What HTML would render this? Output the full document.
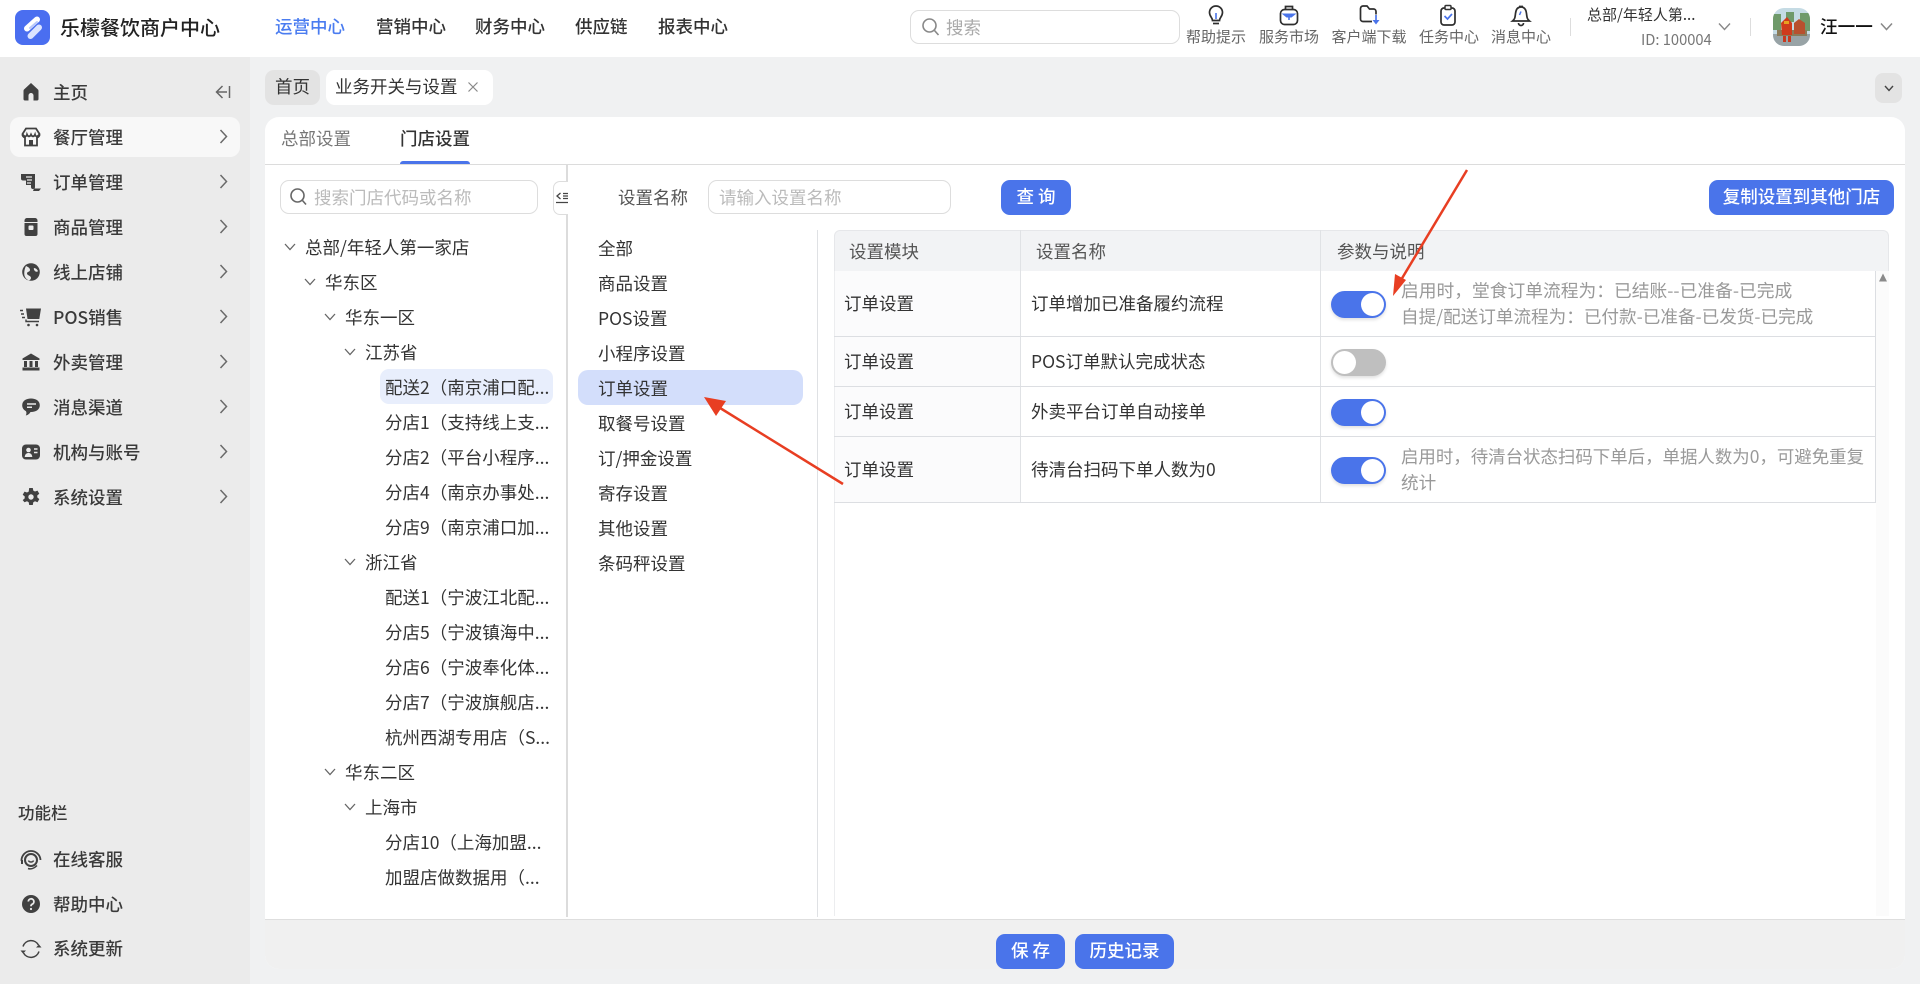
<!DOCTYPE html>
<html lang="zh"><head><meta charset="utf-8"><title>乐檬餐饮商户中心</title>
<style>
*{box-sizing:border-box}
html,body{margin:0;padding:0}
body{width:1920px;height:984px;position:relative;overflow:hidden;background:#f1f2f4;font-family:"Noto Sans CJK SC","Liberation Sans",sans-serif;font-size:17.5px;color:#333}
.a{position:absolute}
.t{position:absolute;white-space:nowrap;line-height:24px;height:24px}
svg{position:absolute;overflow:visible}
.nav{color:#333;font-size:17.5px;font-weight:500}
.side{color:#3a3a3a;left:53px;font-weight:500;font-size:17.5px;margin-top:1px}
.lbl{font-size:15px;color:#666;transform:translateX(-50%)}
.hi{fill:none;stroke:#2e2e2e;stroke-width:1.7}
.row{position:absolute;height:1px;background:#dcdee2;left:834px;width:1042px}
.tog{position:absolute;left:1331px;width:55px;height:27px;border-radius:14px;background:#4a74ea;box-shadow:0 2px 3px rgba(0,0,0,.12)}
.tog i{position:absolute;right:2px;top:2px;width:23px;height:23px;border-radius:50%;background:#fff}
.tog.off{background:#bfbfbf}.tog.off i{left:2px;right:auto}
.btn{position:absolute;background:#4a74ea;color:#fff;border-radius:9px;text-align:center;font-size:17.5px;height:35px;line-height:34px;font-weight:500}
.leaf{color:#333;margin-top:1px}
.gray{color:#999}
.desc{color:#999;font-size:17.6px}
.cat{left:598px;color:#333;margin-top:1px}
.cell{color:#333}
</style></head><body>

<!-- header -->
<div class="a" style="left:0;top:0;width:1920px;height:57px;background:#fff"></div>
<svg style="left:15px;top:10px" width="35" height="35" viewBox="0 0 35 35"><rect width="35" height="35" rx="8" fill="#4a6ef0"/><path d="M12 18.500L22 9.500" stroke="#fff" stroke-width="6" stroke-linecap="round"/><path d="M15.500 26L24 17.500" stroke="#dbe4ff" stroke-width="6" stroke-linecap="round"/><path d="M15 18L22 12" stroke="#b9c9fb" stroke-width="2" stroke-linecap="round"/></svg>
<div class="t" style="left:60px;top:15px;font-size:20px;font-weight:500;color:#222">乐檬餐饮商户中心</div>
<div class="t nav" style="left:275px;top:15px;color:#4a7cf0">运营中心</div>
<div class="t nav" style="left:376px;top:15px">营销中心</div>
<div class="t nav" style="left:475px;top:15px">财务中心</div>
<div class="t nav" style="left:575px;top:15px">供应链</div>
<div class="t nav" style="left:658px;top:15px">报表中心</div>

<div class="a" style="left:910px;top:10px;width:270px;height:34px;border:1px solid #ddd;border-radius:9px;background:#fff"></div>
<svg style="left:921px;top:17px" width="20" height="20" viewBox="0 0 20 20"><circle cx="8.500" cy="8.500" r="6.500" fill="none" stroke="#888" stroke-width="1.600"/><path d="M13.500 13.500L17.500 18" stroke="#888" stroke-width="1.600"/></svg>
<div class="t gray" style="left:946px;top:16px;color:#aaa">搜索</div>

<svg style="left:1205px;top:4px" width="22" height="22" viewBox="0 0 22 22"><path class="hi" d="M7.500 16.500C7.500 13.500 4.500 12.500 4.500 8.500a6.500 6.500 0 0 1 13 0c0 4-3 5-3 8z"/><path class="hi" d="M8 19.500h6"/><path d="M11 9v6" stroke="#4a74ea" stroke-width="1.600"/></svg>
<svg style="left:1278px;top:4px" width="22" height="22" viewBox="0 0 22 22"><rect class="hi" x="2.500" y="5.500" width="17" height="15" rx="4"/><path class="hi" d="M7.500 5.500V2.500h7v3"/><path d="M3.500 9.500h15l-5 4h-5z" fill="#4a74ea"/><path d="M11 13v3" stroke="#4a74ea" stroke-width="1.600"/></svg>
<svg style="left:1358px;top:4px" width="24" height="22" viewBox="0 0 24 22"><path class="hi" d="M14 17.500H5a2.500 2.500 0 0 1-2.500-2.500V4.500A2.500 2.500 0 0 1 5 2h4l2.500 3H15.500a2.500 2.500 0 0 1 2.500 2.500v3"/><path d="M18 11v7" stroke="#4a74ea" stroke-width="1.700"/><path d="M14.500 16h7L18 20.500z" fill="#4a74ea"/></svg>
<svg style="left:1437px;top:4px" width="22" height="22" viewBox="0 0 22 22"><rect class="hi" x="4" y="4" width="14" height="17" rx="3"/><rect x="8" y="1.500" width="6" height="4" rx="1" fill="#fff" stroke="#333" stroke-width="1.500"/><path d="M7.500 12l3 3 4.500-5" fill="none" stroke="#4a74ea" stroke-width="1.700"/></svg>
<svg style="left:1510px;top:4px" width="22" height="22" viewBox="0 0 22 22"><path class="hi" d="M2.500 17c2.500-2 2.500-3.500 3-7.500C6 5 8 3 11 3s5 2 5.500 6.500c.5 4 .5 5.500 3 7.500z"/><path class="hi" d="M9 2.500h4M8.500 19a2.500 2.500 0 0 0 5 0"/><path d="M11 7.500L9.500 11" stroke="#4a74ea" stroke-width="1.500"/></svg>
<div class="t lbl" style="left:1216px;top:25px">帮助提示</div>
<div class="t lbl" style="left:1289px;top:25px">服务市场</div>
<div class="t lbl" style="left:1369px;top:25px">客户端下载</div>
<div class="t lbl" style="left:1449px;top:25px">任务中心</div>
<div class="t lbl" style="left:1521px;top:25px">消息中心</div>

<div class="a" style="left:1570px;top:18px;width:1px;height:18px;background:#ddd"></div>
<div class="t" style="left:1587px;top:3px;font-size:15px;color:#333">总部/年轻人第...</div>
<div class="t" style="left:1641px;top:28px;font-size:14.7px;color:#777">ID: 100004</div>
<svg style="left:1718px;top:22px" width="13" height="9" viewBox="0 0 13 9"><path d="M1 1.500l5.500 6 5.500-6" fill="none" stroke="#888" stroke-width="1.400"/></svg>
<div class="a" style="left:1750px;top:18px;width:1px;height:18px;background:#ddd"></div>
<svg style="left:1773px;top:8px" width="37" height="38" viewBox="0 0 37 38"><clipPath id="av"><rect width="37" height="38" rx="11"/></clipPath><g clip-path="url(#av)"><rect width="37" height="38" fill="#c5dbe4"/><path d="M0 6h8v16H0zM27 5h10v18H27zM13 4h8v10h-8z" fill="#6f9a6a"/><rect y="26" width="37" height="12" fill="#98a3a6"/><rect x="4" y="22" width="30" height="6" fill="#8a7a58"/><path d="M8 15l6-6 5 6v12H9z" fill="#cf3a1c"/><path d="M21 15l5-4 6 4v11H21z" fill="#b8502e"/><path d="M11 13h5v3h-5z" fill="#e8a020"/><rect x="10" y="28" width="3" height="6" fill="#c9381e"/><rect x="15" y="28" width="3" height="6" fill="#c9381e"/></g></svg>
<div class="t" style="left:1820px;top:15px;font-size:17.6px;font-weight:500;color:#111">汪一一</div>
<svg style="left:1880px;top:22px" width="13" height="9" viewBox="0 0 13 9"><path d="M1 1.500l5.500 6 5.500-6" fill="none" stroke="#888" stroke-width="1.500"/></svg>

<!-- sidebar -->
<div class="a" style="left:0;top:57px;width:250px;height:927px;background:#ebebeb"></div>
<div class="a" style="left:10px;top:117px;width:230px;height:40px;background:#f8f8f8;border-radius:10px"></div>

<svg style="left:21px;top:82px" width="20" height="20" viewBox="0 0 20 20"><path d="M10 1L3 7.500Q2.500 8 2.500 9V17Q2.500 18.500 4 18.500H7.500v-5a2.500 2.500 0 0 1 5 0v5H16Q17.500 18.500 17.500 17V9Q17.500 8 17 7.500z" fill="#414141"/></svg>
<svg style="left:21px;top:127px" width="20" height="20" viewBox="0 0 20 20"><path d="M5 1.500h10l3.500 5.500a3 3 0 0 1-2.500 3.500v8H4v-8A3 3 0 0 1 1.500 7z" fill="none" stroke="#414141" stroke-width="1.800"/><path d="M2 7.500c1 2.500 3.500 2.500 4 0 1 2.500 3 2.500 4 0 1 2.500 3 2.500 4 0 .5 2.500 3 2.500 4 0" fill="none" stroke="#414141" stroke-width="1.700"/><rect x="8" y="13" width="4" height="5.500" fill="#414141"/></svg>
<svg style="left:20px;top:172px" width="22" height="20" viewBox="0 0 22 20"><path d="M1 2h14v13a2 2 0 0 1-2 2 2 2 0 0 1-2-2V13H6V8.500H3A2 2 0 0 1 1 6.500z" fill="#414141"/><path d="M6 5h6M7 8h5M7 11h4" stroke="#ebebeb" stroke-width="1.300"/><path d="M13 19h6l2-2.500h-7z" fill="#414141"/></svg>
<svg style="left:21px;top:217px" width="20" height="20" viewBox="0 0 20 20"><path d="M6 1h8a2.500 2.500 0 0 1 2.500 2.500V17a2 2 0 0 1-2 2H5.500a2 2 0 0 1-2-2V3.500A2.500 2.500 0 0 1 6 1z" fill="#414141"/><path d="M3.500 5.500h13" stroke="#ebebeb" stroke-width="1"/><rect x="7.500" y="8.500" width="5" height="4.500" rx="1" fill="#ebebeb"/></svg>
<svg style="left:21px;top:262px" width="20" height="20" viewBox="0 0 20 20"><circle cx="10" cy="10" r="8.800" fill="#414141"/><path d="M5 4c2 1 4 2 4 4s-3 1.500-3 3.500 4 2 4 4.500c0 1-1 2-2 2.500-1-.3-3-1.500-4-3.500-1.500-3-.5-8.500 1-11zM13 6c1.500 0 3 1 4 3-1 1.500-3 .5-3.500-.5S12.500 7 13 6z" fill="#ebebeb"/></svg>
<svg style="left:20px;top:307px" width="22" height="20" viewBox="0 0 22 20"><path d="M6 1.500h15l-1.700 10.500H7.500z" fill="#414141"/><path d="M6 12.500v2h13" fill="none" stroke="#414141" stroke-width="1.400"/><circle cx="8.500" cy="18" r="1.300" fill="#414141"/><circle cx="17" cy="18" r="1.300" fill="#414141"/><path d="M0 3.500h3M1 7h3M2 10.500h3" stroke="#414141" stroke-width="1.500"/></svg>
<svg style="left:21px;top:352px" width="20" height="20" viewBox="0 0 20 20"><path d="M10 1.500L1.500 6.500V8h17V6.500z" fill="#414141"/><rect x="3" y="9" width="3" height="6" fill="#414141"/><rect x="8.500" y="9" width="3" height="6" fill="#414141"/><rect x="14" y="9" width="3" height="6" fill="#414141"/><rect x="1.500" y="15.500" width="17" height="3" fill="#414141"/></svg>
<svg style="left:21px;top:397px" width="20" height="20" viewBox="0 0 20 20"><path d="M10 1.500c5 0 8.800 2.500 8.800 6.800S15 15 10 15l-.5 0C8.800 16.500 7 18 4.800 18.500 5.500 17 5.700 15.500 5 14.200 2.700 13 1.200 11 1.200 8.300 1.200 4 5 1.500 10 1.500z" fill="#414141"/><path d="M6 7h9M6 10.300h5" stroke="#ebebeb" stroke-width="1.500"/></svg>
<svg style="left:21px;top:442px" width="20" height="20" viewBox="0 0 20 20"><rect x="1" y="2.500" width="18" height="15" rx="4" fill="#414141"/><circle cx="7.500" cy="8" r="2.300" fill="#ebebeb"/><path d="M3.700 15c.3-3 2-4 3.800-4s3.500 1 3.800 4z" fill="#ebebeb"/><path d="M13 7h3.500M13 10.500h3.500" stroke="#ebebeb" stroke-width="1.500"/></svg>
<svg style="left:21px;top:487px" width="20" height="20" viewBox="0 0 20 20"><path d="M8.200 1h3.600l.5 2.600 1.700.9 2.500-.9 1.800 3.100-2 1.700v2l2 1.700-1.800 3.100-2.500-.9-1.700.9-.5 2.800H8.200l-.5-2.800-1.700-.9-2.500.9L1.700 13.100l2-1.700v-2l-2-1.700L3.500 4.600l2.500.9 1.700-.9z" fill="#414141"/><circle cx="10" cy="10" r="2.700" fill="#ebebeb"/></svg>

<div class="t side" style="top:80px">主页</div>
<div class="t side" style="top:125px">餐厅管理</div>
<div class="t side" style="top:170px">订单管理</div>
<div class="t side" style="top:215px">商品管理</div>
<div class="t side" style="top:260px">线上店铺</div>
<div class="t side" style="top:305px">POS销售</div>
<div class="t side" style="top:350px">外卖管理</div>
<div class="t side" style="top:395px">消息渠道</div>
<div class="t side" style="top:440px">机构与账号</div>
<div class="t side" style="top:485px">系统设置</div>

<svg style="left:215px;top:85px" width="16" height="14" viewBox="0 0 16 14"><path d="M7.500 1L1.500 7l6 6M1.500 7H12M14.500 1v12" fill="none" stroke="#666" stroke-width="1.500"/></svg>
<svg style="left:219px;top:129px" width="9" height="15" viewBox="0 0 9 15"><path d="M1.500 1l6 6.500-6 6.500" fill="none" stroke="#6a6a6a" stroke-width="1.500"/></svg>
<svg style="left:219px;top:174px" width="9" height="15" viewBox="0 0 9 15"><path d="M1.500 1l6 6.500-6 6.500" fill="none" stroke="#6a6a6a" stroke-width="1.500"/></svg>
<svg style="left:219px;top:219px" width="9" height="15" viewBox="0 0 9 15"><path d="M1.500 1l6 6.500-6 6.500" fill="none" stroke="#6a6a6a" stroke-width="1.500"/></svg>
<svg style="left:219px;top:264px" width="9" height="15" viewBox="0 0 9 15"><path d="M1.500 1l6 6.500-6 6.500" fill="none" stroke="#6a6a6a" stroke-width="1.500"/></svg>
<svg style="left:219px;top:309px" width="9" height="15" viewBox="0 0 9 15"><path d="M1.500 1l6 6.500-6 6.500" fill="none" stroke="#6a6a6a" stroke-width="1.500"/></svg>
<svg style="left:219px;top:354px" width="9" height="15" viewBox="0 0 9 15"><path d="M1.500 1l6 6.500-6 6.500" fill="none" stroke="#6a6a6a" stroke-width="1.500"/></svg>
<svg style="left:219px;top:399px" width="9" height="15" viewBox="0 0 9 15"><path d="M1.500 1l6 6.500-6 6.500" fill="none" stroke="#6a6a6a" stroke-width="1.500"/></svg>
<svg style="left:219px;top:444px" width="9" height="15" viewBox="0 0 9 15"><path d="M1.500 1l6 6.500-6 6.500" fill="none" stroke="#6a6a6a" stroke-width="1.500"/></svg>
<svg style="left:219px;top:489px" width="9" height="15" viewBox="0 0 9 15"><path d="M1.500 1l6 6.500-6 6.500" fill="none" stroke="#6a6a6a" stroke-width="1.500"/></svg>

<div class="t" style="left:18px;top:800px;font-size:16.5px;font-weight:500;color:#3a3a3a">功能栏</div>
<svg style="left:20px;top:849px" width="22" height="22" viewBox="0 0 22 22"><path d="M1.500 12a9 9 0 0 1 19-1" fill="none" stroke="#414141" stroke-width="1.800"/><circle cx="11" cy="11" r="6" fill="none" stroke="#414141" stroke-width="2"/><path d="M8.500 11.500c.5 2 4.500 2 5 0" fill="none" stroke="#414141" stroke-width="1.500"/><path d="M1 11v4l2 0v-4z" fill="#414141"/><path d="M8 19.500c3 1 6 0 9-3" fill="none" stroke="#414141" stroke-width="1.500"/></svg>
<svg style="left:21px;top:894px" width="20" height="20" viewBox="0 0 20 20"><circle cx="10" cy="10" r="9" fill="#414141"/><path d="M7.300 7.500a2.800 2.800 0 1 1 3.900 2.700c-.9.400-1.200 1-1.200 2" fill="none" stroke="#ebebeb" stroke-width="1.800"/><circle cx="10" cy="15" r="1.100" fill="#ebebeb"/></svg>
<svg style="left:20px;top:938px" width="22" height="22" viewBox="0 0 22 22"><path d="M3 8.500a8.500 8.500 0 0 1 15.500-1.500M19 13.500A8.500 8.500 0 0 1 3.500 15" fill="none" stroke="#414141" stroke-width="1.500"/><path d="M16 9.500h5.500L19 6.500z M.5 12.500h5.500L3 15.500z" fill="#414141"/></svg>
<div class="t side" style="top:847px">在线客服</div>
<div class="t side" style="top:892px">帮助中心</div>
<div class="t side" style="top:936px">系统更新</div>

<!-- tabs -->
<div class="a" style="left:250px;top:57px;width:1670px;height:927px;background:#f0f1f2"></div>
<div class="a" style="left:265px;top:70px;width:55px;height:35px;background:#e3e3e3;border-radius:9px"></div>
<div class="t" style="left:275px;top:75px">首页</div>
<div class="a" style="left:326px;top:70px;width:167px;height:35px;background:#fff;border-radius:9px"></div>
<div class="t" style="left:335px;top:75px">业务开关与设置</div>
<svg style="left:467px;top:81px" width="12" height="12" viewBox="0 0 12 12"><path d="M1.500 1.500l9 9M10.500 1.500l-9 9" stroke="#888" stroke-width="1.200"/></svg>
<div class="a" style="left:1875px;top:73px;width:27px;height:30px;background:#e3e3e3;border-radius:8px"></div>
<svg style="left:1884px;top:85px" width="10" height="7" viewBox="0 0 10 7"><path d="M1 1l4 4.500L9 1" fill="none" stroke="#444" stroke-width="1.400"/></svg>

<!-- card -->
<div class="a" style="left:265px;top:117px;width:1640px;height:852px;background:#fff;border-radius:14px;overflow:hidden">
  <div class="a" style="left:0;top:802px;width:1640px;height:50px;background:#f0f0f0;border-top:1px solid #dedede"></div>
</div>
<div class="t" style="left:281px;top:127px;color:#777">总部设置</div>
<div class="t" style="left:400px;top:127px;color:#333;font-weight:500">门店设置</div>
<div class="a" style="left:400px;top:161px;width:70px;height:4px;background:#4a74ea;border-radius:3px 3px 0 0"></div>
<div class="a" style="left:265px;top:164px;width:1640px;height:1px;background:#dcdcdc"></div>
<div class="a" style="left:566px;top:165px;width:2px;height:752px;background:#dcdcdc"></div>

<!-- tree -->
<div class="a" style="left:280px;top:180px;width:258px;height:34px;border:1px solid #ddd;border-radius:9px"></div>
<svg style="left:289px;top:187px" width="20" height="20" viewBox="0 0 20 20"><circle cx="8.500" cy="8.500" r="6.500" fill="none" stroke="#666" stroke-width="1.600"/><path d="M13.500 13.500L17 17.500" stroke="#666" stroke-width="1.600"/></svg>
<div class="t" style="left:314px;top:186px;color:#bbb">搜索门店代码或名称</div>
<div class="a" style="left:553px;top:181px;width:15px;height:34px;background:#fff;border:1px solid #ddd;border-right:0;border-radius:7px 0 0 7px"></div>
<svg style="left:556px;top:192px" width="12" height="14" viewBox="0 0 12 14"><path d="M4.500 1L1 4l3.500 3M7 1.500h5M7 4h5M7 6.500h5M0 10.500h12" fill="none" stroke="#444" stroke-width="1.300"/></svg>

<div class="a" style="left:380px;top:369px;width:173px;height:35px;background:#e8eefc;border-radius:9px"></div>

<svg style="left:284px;top:243px" width="12" height="8" viewBox="0 0 12 8"><path d="M1 1l5 5.500L11 1" fill="none" stroke="#666" stroke-width="1.300"/></svg>
<svg style="left:304px;top:278px" width="12" height="8" viewBox="0 0 12 8"><path d="M1 1l5 5.500L11 1" fill="none" stroke="#666" stroke-width="1.300"/></svg>
<svg style="left:324px;top:313px" width="12" height="8" viewBox="0 0 12 8"><path d="M1 1l5 5.500L11 1" fill="none" stroke="#666" stroke-width="1.300"/></svg>
<svg style="left:344px;top:348px" width="12" height="8" viewBox="0 0 12 8"><path d="M1 1l5 5.500L11 1" fill="none" stroke="#666" stroke-width="1.300"/></svg>
<svg style="left:344px;top:558px" width="12" height="8" viewBox="0 0 12 8"><path d="M1 1l5 5.500L11 1" fill="none" stroke="#666" stroke-width="1.300"/></svg>
<svg style="left:324px;top:768px" width="12" height="8" viewBox="0 0 12 8"><path d="M1 1l5 5.500L11 1" fill="none" stroke="#666" stroke-width="1.300"/></svg>
<svg style="left:344px;top:803px" width="12" height="8" viewBox="0 0 12 8"><path d="M1 1l5 5.500L11 1" fill="none" stroke="#666" stroke-width="1.300"/></svg>

<div class="t leaf" style="left:305px;top:235px">总部/年轻人第一家店</div>
<div class="t leaf" style="left:325px;top:270px">华东区</div>
<div class="t leaf" style="left:345px;top:305px">华东一区</div>
<div class="t leaf" style="left:365px;top:340px">江苏省</div>
<div class="t leaf" style="left:385px;top:375px">配送2（南京浦口配...</div>
<div class="t leaf" style="left:385px;top:410px">分店1（支持线上支...</div>
<div class="t leaf" style="left:385px;top:445px">分店2（平台小程序...</div>
<div class="t leaf" style="left:385px;top:480px">分店4（南京办事处...</div>
<div class="t leaf" style="left:385px;top:515px">分店9（南京浦口加...</div>
<div class="t leaf" style="left:365px;top:550px">浙江省</div>
<div class="t leaf" style="left:385px;top:585px">配送1（宁波江北配...</div>
<div class="t leaf" style="left:385px;top:620px">分店5（宁波镇海中...</div>
<div class="t leaf" style="left:385px;top:655px">分店6（宁波奉化体...</div>
<div class="t leaf" style="left:385px;top:690px">分店7（宁波旗舰店...</div>
<div class="t leaf" style="left:385px;top:725px">杭州西湖专用店（S...</div>
<div class="t leaf" style="left:345px;top:760px">华东二区</div>
<div class="t leaf" style="left:365px;top:795px">上海市</div>
<div class="t leaf" style="left:385px;top:830px">分店10（上海加盟...</div>
<div class="t leaf" style="left:385px;top:865px">加盟店做数据用（...</div>

<!-- query bar -->
<div class="t" style="left:618px;top:186px;color:#555">设置名称</div>
<div class="a" style="left:708px;top:180px;width:243px;height:34px;border:1px solid #ddd;border-radius:9px"></div>
<div class="t" style="left:719px;top:186px;color:#bbb">请输入设置名称</div>
<div class="btn" style="left:1001px;top:180px;width:70px">查 询</div>
<div class="btn" style="left:1709px;top:180px;width:185px">复制设置到其他门店</div>

<!-- categories -->
<div class="a" style="left:578px;top:370px;width:225px;height:35px;background:#d3defb;border-radius:10px"></div>
<div class="a" style="left:817px;top:230px;width:1px;height:687px;background:#dfe1e4"></div>
<div class="t cat" style="top:236px">全部</div>
<div class="t cat" style="top:271px">商品设置</div>
<div class="t cat" style="top:306px">POS设置</div>
<div class="t cat" style="top:341px">小程序设置</div>
<div class="t cat" style="top:376px">订单设置</div>
<div class="t cat" style="top:411px">取餐号设置</div>
<div class="t cat" style="top:446px">订/押金设置</div>
<div class="t cat" style="top:481px">寄存设置</div>
<div class="t cat" style="top:516px">其他设置</div>
<div class="t cat" style="top:551px">条码秤设置</div>

<!-- table -->
<div class="a" style="left:834px;top:230px;width:1055px;height:41px;background:#f2f3f5;border:1px solid #e6e7ea;border-bottom:0;border-radius:6px 6px 0 0"></div>
<div class="a" style="left:835px;top:271px;width:186px;height:231px;background:#fbfbfc"></div>
<div class="a" style="left:1876px;top:271px;width:13px;height:645px;background:#fbfbfb"></div>
<div class="a" style="left:834px;top:271px;width:1px;height:645px;background:#ecedef"></div>
<div class="a" style="left:1020px;top:230px;width:1px;height:272px;background:#e0e2e5"></div>
<div class="a" style="left:1320px;top:230px;width:1px;height:272px;background:#e0e2e5"></div>
<div class="a" style="left:1875px;top:271px;width:1px;height:231px;background:#dcdee2"></div>
<div class="row" style="top:336px"></div>
<div class="row" style="top:386px"></div>
<div class="row" style="top:436px"></div>
<div class="row" style="top:502px"></div>
<svg style="left:1878px;top:273px" width="10" height="9" viewBox="0 0 10 9"><path d="M5 0.500L9 8.500H1z" fill="#8a8a8a"/></svg>

<div class="t" style="left:849px;top:240px;color:#555">设置模块</div>
<div class="t" style="left:1036px;top:240px;color:#555">设置名称</div>
<div class="t" style="left:1337px;top:240px;color:#555">参数与说明</div>

<div class="t cell" style="left:844px;top:292px">订单设置</div>
<div class="t cell" style="left:1031px;top:292px">订单增加已准备履约流程</div>
<div class="tog" style="top:291px"><i></i></div>
<div class="t desc" style="left:1401px;top:278px;font-size:17.75px">启用时，堂食订单流程为：已结账--已准备-已完成</div>
<div class="t desc" style="left:1401px;top:305px;font-size:17.6px">自提/配送订单流程为：已付款-已准备-已发货-已完成</div>

<div class="t cell" style="left:844px;top:350px">订单设置</div>
<div class="t cell" style="left:1031px;top:350px">POS订单默认完成状态</div>
<div class="tog off" style="top:349px"><i></i></div>

<div class="t cell" style="left:844px;top:400px">订单设置</div>
<div class="t cell" style="left:1031px;top:400px">外卖平台订单自动接单</div>
<div class="tog" style="top:399px"><i></i></div>

<div class="t cell" style="left:844px;top:458px">订单设置</div>
<div class="t cell" style="left:1031px;top:458px">待清台扫码下单人数为0</div>
<div class="tog" style="top:457px"><i></i></div>
<div class="t desc" style="left:1401px;top:445px;font-size:17.45px">启用时，待清台状态扫码下单后，单据人数为0，可避免重复</div>
<div class="t desc" style="left:1401px;top:471px">统计</div>

<!-- footer buttons -->
<div class="btn" style="left:996px;top:934px;width:69px">保 存</div>
<div class="btn" style="left:1075px;top:934px;width:99px">历史记录</div>

<!-- red arrows -->
<svg style="left:0;top:0" width="1920" height="984" viewBox="0 0 1920 984">
<path d="M843 484L712 403" stroke="#e83e22" stroke-width="2.500"/><path d="M704 397L726 401L716 416z" fill="#e83e22"/>
<path d="M1467 170L1398 285" stroke="#e83e22" stroke-width="2.500" fill="none"/>
<path d="M1393 296L1395 274L1406 280z" fill="#e83e22"/>
</svg>
</body></html>
